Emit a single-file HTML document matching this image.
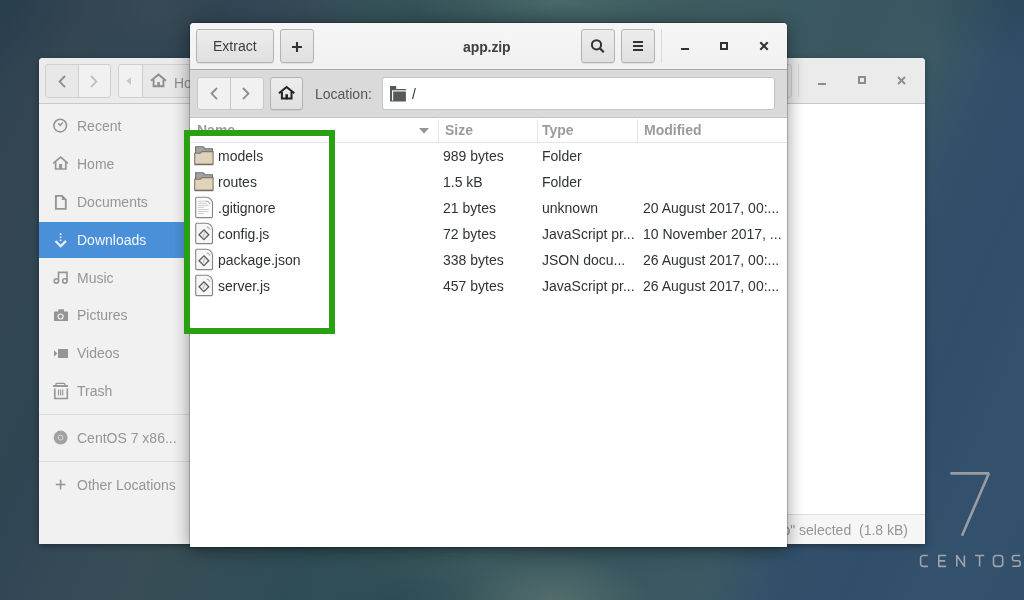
<!DOCTYPE html>
<html><head><meta charset="utf-8">
<style>
*{margin:0;padding:0;box-sizing:border-box}
html,body{width:1024px;height:600px;overflow:hidden}
body{position:relative;font-family:"Liberation Sans",sans-serif;font-size:14px;background:#2f4652;}
#bg{position:absolute;left:0;top:0;width:1024px;height:600px;
background:
 radial-gradient(ellipse 90px 70px at 0px 0px, rgba(38,58,74,0.5), rgba(38,58,74,0) 100%),
 radial-gradient(ellipse 120px 70px at 1024px 0px, rgba(40,66,84,0.6), rgba(40,66,84,0) 100%),
 radial-gradient(ellipse 60px 40px at 160px 10px, rgba(62,76,86,0.5), rgba(62,76,86,0) 100%),
 radial-gradient(ellipse 150px 40px at 560px 0px, rgba(74,108,106,0.95), rgba(74,108,106,0) 100%),
 radial-gradient(ellipse 110px 35px at 400px 0px, rgba(50,86,90,0.7), rgba(50,86,90,0) 100%),
 radial-gradient(ellipse 95px 45px at 556px 600px, rgba(84,110,108,0.95), rgba(84,110,108,0) 100%),
 radial-gradient(ellipse 130px 55px at 390px 600px, rgba(42,72,80,0.75), rgba(42,72,80,0) 100%),
 linear-gradient(113deg,#2b4150 0%,#334551 6%,#314753 12%,#2f4552 17%,#344856 22%,#384d56 30%,#2f4d55 42%,#3d5b60 56%,#3a5760 68%,#3c5963 74%,#32506a 80%,#304d6a 86%,#33506c 92%,#32506c 100%);}
.abs{position:absolute}
.win{position:absolute;overflow:hidden}
#bw{left:39px;top:58px;width:886px;height:486px;background:#fff;border-radius:4px 4px 0 0;
 box-shadow:0 2px 6px rgba(0,0,0,0.35)}
#bwh{left:0;top:0;width:886px;height:46px;background:#ebebeb;border-bottom:1px solid #c9c9c7}
#fw{left:190px;top:23px;width:597px;height:524px;background:#fff;border-radius:4px 4px 0 0;
 box-shadow:0 0 0 1px rgba(0,0,0,0.2),0 3px 18px rgba(0,0,0,0.42)}
#fwh{left:0;top:0;width:597px;height:47px;background:linear-gradient(#f6f6f6,#f1f1f1);border-bottom:1px solid #a9a9a6}
#tb{left:0;top:47px;width:597px;height:48px;background:#dadada;border-bottom:1px solid #c4c4c2}
.btn{position:absolute;border:1px solid #b3b3b0;border-radius:3px;background:linear-gradient(#ededed,#dfdfdf);
 box-shadow:0 1px 0 rgba(0,0,0,0.07)}
.txt{will-change:transform;position:absolute;white-space:nowrap;line-height:14px}
.hdr{will-change:transform;position:absolute;white-space:nowrap;line-height:14px;font-weight:bold;color:#9a9c9c}
.vsep{position:absolute;width:1px;background:#e3e3e3}
</style></head><body>
<div id="bg"></div>

<!-- CentOS logo -->
<svg class="abs" style="left:900px;top:460px" width="124" height="120" viewBox="900 460 124 120">
 <path d="M950.4 473.4h38.4L962 535.8" fill="none" stroke="#999da2" stroke-width="2.6" stroke-linejoin="bevel"/>
 <g fill="none" stroke="#9fa4a9" stroke-width="1.6" stroke-linejoin="round">
  <path d="M927.8 555.5h-4.6a2.6 2.6 0 0 0-2.6 2.6v5.7a2.6 2.6 0 0 0 2.6 2.6h4.6"/>
  <path d="M946.2 555.5h-7.4v10.9h7.4M938.8 560.9h6.4"/>
  <path d="M956.8 566.5V555.5l7.6 10.9V555.5"/>
  <path d="M975 555.5h9.2M979.6 555.5v11"/>
  <path d="M996.1 555.5h4a2.6 2.6 0 0 1 2.6 2.6v5.7a2.6 2.6 0 0 1-2.6 2.6h-4a2.6 2.6 0 0 1-2.6-2.6v-5.7a2.6 2.6 0 0 1 2.6-2.6z"/>
  <path d="M1020.2 555.5h-5.6a2.2 2.2 0 0 0-2.2 2.2v0.8a2.2 2.2 0 0 0 2.2 2.2h3.4a2.2 2.2 0 0 1 2.2 2.2v1.2a2.2 2.2 0 0 1-2.2 2.2h-5.8"/>
 </g>
</svg>

<!-- back window -->
<div id="bw" class="win">
  <div id="bwh" class="abs">
    <!-- nav group -->
    <div class="abs" style="left:6px;top:6px;width:66px;height:34px;border:1px solid #cfcfcd;border-radius:3px;background:#f1f1f1;overflow:hidden">
      <div class="abs" style="left:0;top:0;width:33px;height:32px;background:#e8e8e8;border-right:1px solid #cfcfcd"></div>
    </div>
    <svg class="abs" style="left:18px;top:17px" width="10" height="14" viewBox="0 0 10 14"><path d="M8 1L2.6 6.6 8 12.2" fill="none" stroke="#8b8e8f" stroke-width="1.9"/></svg>
    <svg class="abs" style="left:50px;top:17px" width="10" height="14" viewBox="0 0 10 14"><path d="M2 1l5.4 5.6L2 12.2" fill="none" stroke="#bfc1c2" stroke-width="1.9"/></svg>
    <!-- path bar -->
    <div class="abs" style="left:79px;top:6px;width:200px;height:34px;border:1px solid #cfcfcd;border-radius:3px;background:#e8e8e8;overflow:hidden">
      <div class="abs" style="left:0;top:0;width:24px;height:32px;background:#f1f1f1;border-right:1px solid #cfcfcd"></div>
    </div>
    <svg class="abs" style="left:86px;top:18px" width="8" height="10" viewBox="0 0 8 10"><path d="M6 1v8L1.5 5z" fill="#c4c6c7"/></svg>
    <svg class="abs" style="left:111px;top:15px" width="18" height="16" viewBox="0 0 18 16"><path d="M1 7.7L8.5 1.4l7.5 6.3" fill="none" stroke="#8b8e8f" stroke-width="1.9"/><path d="M3.6 6.6v6.7h9.8V6.6" fill="none" stroke="#8b8e8f" stroke-width="1.9"/><rect x="7.3" y="9" width="2.5" height="5" fill="#8b8e8f"/></svg>
    <div class="txt" style="left:135px;top:18px;color:#8b8e8f">Home</div>
    <!-- right side -->
    <div class="abs" style="left:700px;top:6px;width:53px;height:34px;border:1px solid #cfcfcd;border-radius:3px;background:#e8e8e8"></div>
    <div class="abs" style="left:759px;top:6px;width:1px;height:33px;background:#d3d3d1"></div>
    <div class="abs" style="left:779px;top:25px;width:8px;height:2px;background:#8b8e8f"></div>
    <div class="abs" style="left:819px;top:18px;width:8px;height:8px;border:2px solid #8b8e8f"></div>
    <svg class="abs" style="left:858px;top:18px" width="9" height="9" viewBox="0 0 9 9"><path d="M1 1l7 7M8 1l-7 7" stroke="#8b8e8f" stroke-width="1.9"/></svg>
  </div>
  <!-- sidebar -->
  <div class="abs" style="left:0;top:46px;width:180px;height:440px;background:#f1f1f1">
  </div>
  <div class="abs" style="left:0;top:356px;width:180px;height:1px;background:#dcdcdc"></div>
  <div class="abs" style="left:0;top:403px;width:180px;height:1px;background:#dcdcdc"></div>
  <div class="abs" style="left:0;top:0;width:180px;height:486px">
<div class="txt" style="left:38px;top:61px;color:#939697;">Recent</div>
<div class="txt" style="left:38px;top:99px;color:#939697;">Home</div>
<div class="txt" style="left:38px;top:137px;color:#939697;">Documents</div>
<div class="abs" style="left:0;top:164px;width:160px;height:36px;background:#4a90d9"></div>
<div class="txt" style="left:38px;top:175px;color:#f3f7fc;">Downloads</div>
<div class="txt" style="left:38px;top:213px;color:#939697;">Music</div>
<div class="txt" style="left:38px;top:250px;color:#939697;">Pictures</div>
<div class="txt" style="left:38px;top:288px;color:#939697;">Videos</div>
<div class="txt" style="left:38px;top:326px;color:#939697;">Trash</div>
<div class="txt" style="left:38px;top:373px;color:#939697;">CentOS 7 x86...</div>
<div class="txt" style="left:38px;top:420px;color:#939697;">Other Locations</div>
  </div>
  <!-- status bar -->
  <div class="abs" style="left:151px;top:456px;width:735px;height:30px;background:#f6f6f6;border-top:1px solid #dcdcdc"></div>
  <div class="txt" style="left:700px;top:465px;color:#939596;text-align:right;width:169px">app.zip" selected&nbsp;&nbsp;(1.8 kB)</div>
</div>

<!-- sidebar icons (page coords) -->
<svg class="abs" style="left:0;top:0" width="200" height="600" viewBox="0 0 200 600">

<circle cx="60.2" cy="125.6" r="6.3" fill="none" stroke="#939596" stroke-width="1.6"/>
<path d="M58.2 123.2l2 2.1 2.6-2.8" fill="none" stroke="#939596" stroke-width="1.5"/>
<path d="M53.2 163.4L60.6 157l7.4 6.4" fill="none" stroke="#939596" stroke-width="1.7"/>
<path d="M55.6 162v7h10.2v-7" fill="none" stroke="#939596" stroke-width="1.7"/>
<rect x="59.1" y="164" width="3" height="5" fill="#939596"/>
<path d="M55.9 195.9h6l3.9 4v9h-9.9z" fill="none" stroke="#939596" stroke-width="1.9"/>
<path d="M61.9 195v5h4.9z" fill="#939596"/>
<path d="M60.6 233.3v1.6M60.6 236.4v1.6M60.6 239.5v1.6" stroke="#e6eef8" stroke-width="1.7"/>
<path d="M55.5 241l5.2 5.2 5.3-5.3" fill="none" stroke="#e6eef8" stroke-width="2.3"/>
<path d="M58.5 280.8V272.4h8.5v8.4" fill="none" stroke="#939596" stroke-width="1.6"/>
<circle cx="56.4" cy="280.9" r="2.2" fill="none" stroke="#939596" stroke-width="1.6"/>
<circle cx="64.9" cy="280.9" r="2.2" fill="none" stroke="#939596" stroke-width="1.6"/>
<path d="M54 311.4h4l0.5-2.2h5.3l0.5 2.2h3.7v9.6H54z" fill="#939596"/>
<circle cx="60.6" cy="316.5" r="3.1" fill="#f1f1f1"/>
<circle cx="60.6" cy="316.5" r="1.9" fill="#939596"/>
<path d="M54 350.2l3.4 3.3-3.4 3.3z" fill="#939596"/>
<rect x="58" y="349" width="10" height="9" fill="#939596"/>
<path d="M53 386h15" stroke="#939596" stroke-width="1.9"/>
<path d="M55.9 385.8v-1.4a1 1 0 0 1 1-1h7a1 1 0 0 1 1 1v1.4" fill="none" stroke="#939596" stroke-width="1.3"/>
<path d="M54.8 388.5v10h12.5v-10" fill="none" stroke="#939596" stroke-width="1.6"/>
<path d="M58.5 389.5v6M60.6 389.5v6M62.7 389.5v6" stroke="#939596" stroke-width="1.1"/>
<circle cx="60.6" cy="437.6" r="7" fill="#a0a2a2"/>
<circle cx="60.6" cy="437.6" r="2.4" fill="none" stroke="#d6d6d6" stroke-width="1"/>
<path d="M55.8 484.5h9.6M60.6 479.8v9.6" stroke="#939596" stroke-width="1.6"/>

</svg>

<!-- front window -->
<div id="fw" class="win">
  <div id="fwh" class="abs">
    <div class="btn" style="left:6px;top:6px;width:78px;height:34px"></div>
    <div class="txt" style="left:23px;top:16px;color:#3a3f41">Extract</div>
    <div class="btn" style="left:90px;top:6px;width:34px;height:34px"></div>
    <svg class="abs" style="left:101px;top:18px" width="12" height="12" viewBox="0 0 12 12"><path d="M6 1v10M1 6h10" stroke="#2e3436" stroke-width="2.1"/></svg>
    <div class="txt" style="left:273px;top:17px;font-weight:bold;color:#3c4143;letter-spacing:-0.1px">app.zip</div>
    <div class="btn" style="left:391px;top:6px;width:34px;height:34px"></div>
    <svg class="abs" style="left:400px;top:15px" width="16" height="16" viewBox="0 0 16 16"><circle cx="6.5" cy="6.8" r="4.6" fill="none" stroke="#2e3436" stroke-width="2"/><path d="M9.8 10.2l4 4" stroke="#2e3436" stroke-width="2.2"/></svg>
    <div class="btn" style="left:431px;top:6px;width:34px;height:34px"></div>
    <div class="abs" style="left:443px;top:18px;width:10px;height:2px;background:#2e3436"></div>
    <div class="abs" style="left:443px;top:22px;width:10px;height:2px;background:#2e3436"></div>
    <div class="abs" style="left:443px;top:26px;width:10px;height:2px;background:#2e3436"></div>
    <div class="abs" style="left:471px;top:6px;width:1px;height:34px;background:#dadad8"></div>
    <div class="abs" style="left:491px;top:25px;width:8px;height:2px;background:#2e3436"></div>
    <div class="abs" style="left:530px;top:19px;width:8px;height:8px;border:2px solid #2e3436"></div>
    <svg class="abs" style="left:569px;top:18px" width="10" height="10" viewBox="0 0 10 10"><path d="M1.3 1.3l7.4 7.4M8.7 1.3l-7.4 7.4" stroke="#2e3436" stroke-width="2"/></svg>
  </div>
  <div id="tb" class="abs">
    <!-- nav -->
    <div class="abs" style="left:7px;top:7px;width:67px;height:33px;border:1px solid #c8c8c6;border-radius:3px;background:#f1f1f1;overflow:hidden">
      <div class="abs" style="left:32px;top:0;width:1px;height:31px;background:#c8c8c6"></div>
    </div>
    <svg class="abs" style="left:19px;top:17px" width="10" height="14" viewBox="0 0 10 14"><path d="M8 1L2.6 6.6 8 12.2" fill="none" stroke="#8b8e8f" stroke-width="1.9"/></svg>
    <svg class="abs" style="left:51px;top:17px" width="10" height="14" viewBox="0 0 10 14"><path d="M2 1l5.4 5.6L2 12.2" fill="none" stroke="#8b8e8f" stroke-width="1.9"/></svg>
    <div class="btn" style="left:80px;top:7px;width:33px;height:33px"></div>
    <svg class="abs" style="left:88px;top:15px" width="18" height="16" viewBox="0 0 18 16"><path d="M1 8.2L8.6 2l7.7 6.2" fill="none" stroke="#1f2324" stroke-width="2.1"/><path d="M3.9 7v6.6h9.6V7" fill="none" stroke="#1f2324" stroke-width="2"/><rect x="7.4" y="9.3" width="2.6" height="5" fill="#1f2324"/></svg>
    <div class="txt" style="left:125px;top:17px;color:#555753">Location:</div>
    <div class="abs" style="left:192px;top:7px;width:393px;height:33px;border:1px solid #c4c4c2;border-radius:3px;background:#fff"></div>
    <svg class="abs" style="left:200px;top:16px" width="17" height="16" viewBox="0 0 17 16"><path d="M0 0h6.2v3h9.7v12.5H0z" fill="#54595b"/><path d="M2.6 14.6V4.9h13.3" fill="none" stroke="#f4f4f4" stroke-width="1.2"/></svg>
    <div class="txt" style="left:222px;top:17px;color:#2e3436">/</div>
  </div>
  <!-- column header -->
  <div class="abs" style="left:0;top:95px;width:597px;height:25px;background:#fff;border-bottom:1px solid #e6e6e6"></div>
  <div class="vsep" style="left:248px;top:96px;height:23px"></div>
  <div class="vsep" style="left:347px;top:96px;height:23px"></div>
  <div class="vsep" style="left:447px;top:96px;height:23px"></div>
  <div class="hdr" style="left:7px;top:100px">Name</div>
  <svg class="abs" style="left:229px;top:105px" width="10" height="6" viewBox="0 0 10 6"><path d="M0 0h10L5 5.5z" fill="#929595"/></svg>
  <div class="hdr" style="left:255px;top:100px">Size</div>
  <div class="hdr" style="left:352px;top:100px">Type</div>
  <div class="hdr" style="left:454px;top:100px">Modified</div>
<svg class="abs" style="left:3px;top:122px" width="22" height="22" viewBox="0 0 22 22">
<path d="M2.6 1.7h7.6l1.6 2h7.6v5.5H2.6z" fill="#a2a2a0" stroke="#6f6f6d" stroke-width="1.1"/>
<path d="M1.7 8.3h5.6l1.8-1.7h11v12.6a0.5 0.5 0 0 1-0.5 0.5h-17.4a0.5 0.5 0 0 1-0.5-0.5z" fill="#e1d3b9" stroke="#7b766e" stroke-width="1.1"/>
<path d="M2.2 19.2h17.6" stroke="#64605a" stroke-width="1"/>
</svg>
<div class="txt" style="left:28px;top:126px;color:#2e3436;">models</div>
<div class="txt" style="left:253px;top:126px;color:#2e3436;">989 bytes</div>
<div class="txt" style="left:352px;top:126px;color:#2e3436;">Folder</div>
<svg class="abs" style="left:3px;top:148px" width="22" height="22" viewBox="0 0 22 22">
<path d="M2.6 1.7h7.6l1.6 2h7.6v5.5H2.6z" fill="#a2a2a0" stroke="#6f6f6d" stroke-width="1.1"/>
<path d="M1.7 8.3h5.6l1.8-1.7h11v12.6a0.5 0.5 0 0 1-0.5 0.5h-17.4a0.5 0.5 0 0 1-0.5-0.5z" fill="#e1d3b9" stroke="#7b766e" stroke-width="1.1"/>
<path d="M2.2 19.2h17.6" stroke="#64605a" stroke-width="1"/>
</svg>
<div class="txt" style="left:28px;top:152px;color:#2e3436;">routes</div>
<div class="txt" style="left:253px;top:152px;color:#2e3436;">1.5 kB</div>
<div class="txt" style="left:352px;top:152px;color:#2e3436;">Folder</div>
<svg class="abs" style="left:4px;top:173px" width="20" height="23" viewBox="0 0 20 23">
<path d="M1.7 2.3a1 1 0 0 1 1-1h9.6a6.2 6.2 0 0 1 6.2 6.2v13.1a1 1 0 0 1-1 1H2.7a1 1 0 0 1-1-1z" fill="#fbfbfb" stroke="#858585" stroke-width="1.1"/>
<path d="M12.6 5.2c1 0 2.6 1.2 3.3 2.6" fill="none" stroke="#7a7a7a" stroke-width="0.9"/>
<path d="M4 5.2h9M4 7.3h9M4 9.4h10.5M4 11.4h6M4 13.5h10.5M4 15.5h10.5M4 17.6h6" stroke="#c9c9c9" stroke-width="0.9"/>
</svg>
<div class="txt" style="left:28px;top:178px;color:#2e3436;">.gitignore</div>
<div class="txt" style="left:253px;top:178px;color:#2e3436;">21 bytes</div>
<div class="txt" style="left:352px;top:178px;color:#2e3436;">unknown</div>
<div class="txt" style="left:453px;top:178px;color:#2e3436;">20 August 2017, 00:...</div>
<svg class="abs" style="left:4px;top:199px" width="20" height="23" viewBox="0 0 20 23">
<path d="M1.7 2.3a1 1 0 0 1 1-1h9.6a6.2 6.2 0 0 1 6.2 6.2v13.1a1 1 0 0 1-1 1H2.7a1 1 0 0 1-1-1z" fill="#f6f6f6" stroke="#858585" stroke-width="1.1"/>
<path d="M12.8 5.1c1 0 2.4 1 3 2.4" fill="none" stroke="#7a7a7a" stroke-width="0.9"/>
<path d="M9.9 7.8l4.9 4.9-4.9 4.9-4.9-4.9z" fill="#ececec" stroke="#5e5e5e" stroke-width="1.3"/>
<path d="M10.6 10.3l-1.4 4.6" stroke="#b0b0b0" stroke-width="0.8"/>
</svg>
<div class="txt" style="left:28px;top:204px;color:#2e3436;">config.js</div>
<div class="txt" style="left:253px;top:204px;color:#2e3436;">72 bytes</div>
<div class="txt" style="left:352px;top:204px;color:#2e3436;">JavaScript pr...</div>
<div class="txt" style="left:453px;top:204px;color:#2e3436;">10 November 2017, ...</div>
<svg class="abs" style="left:4px;top:225px" width="20" height="23" viewBox="0 0 20 23">
<path d="M1.7 2.3a1 1 0 0 1 1-1h9.6a6.2 6.2 0 0 1 6.2 6.2v13.1a1 1 0 0 1-1 1H2.7a1 1 0 0 1-1-1z" fill="#f6f6f6" stroke="#858585" stroke-width="1.1"/>
<path d="M12.8 5.1c1 0 2.4 1 3 2.4" fill="none" stroke="#7a7a7a" stroke-width="0.9"/>
<path d="M9.9 7.8l4.9 4.9-4.9 4.9-4.9-4.9z" fill="#ececec" stroke="#5e5e5e" stroke-width="1.3"/>
<path d="M10.6 10.3l-1.4 4.6" stroke="#b0b0b0" stroke-width="0.8"/>
</svg>
<div class="txt" style="left:28px;top:230px;color:#2e3436;">package.json</div>
<div class="txt" style="left:253px;top:230px;color:#2e3436;">338 bytes</div>
<div class="txt" style="left:352px;top:230px;color:#2e3436;">JSON docu...</div>
<div class="txt" style="left:453px;top:230px;color:#2e3436;">26 August 2017, 00:...</div>
<svg class="abs" style="left:4px;top:251px" width="20" height="23" viewBox="0 0 20 23">
<path d="M1.7 2.3a1 1 0 0 1 1-1h9.6a6.2 6.2 0 0 1 6.2 6.2v13.1a1 1 0 0 1-1 1H2.7a1 1 0 0 1-1-1z" fill="#f6f6f6" stroke="#858585" stroke-width="1.1"/>
<path d="M12.8 5.1c1 0 2.4 1 3 2.4" fill="none" stroke="#7a7a7a" stroke-width="0.9"/>
<path d="M9.9 7.8l4.9 4.9-4.9 4.9-4.9-4.9z" fill="#ececec" stroke="#5e5e5e" stroke-width="1.3"/>
<path d="M10.6 10.3l-1.4 4.6" stroke="#b0b0b0" stroke-width="0.8"/>
</svg>
<div class="txt" style="left:28px;top:256px;color:#2e3436;">server.js</div>
<div class="txt" style="left:253px;top:256px;color:#2e3436;">457 bytes</div>
<div class="txt" style="left:352px;top:256px;color:#2e3436;">JavaScript pr...</div>
<div class="txt" style="left:453px;top:256px;color:#2e3436;">26 August 2017, 00:...</div>
</div>

<!-- green highlight -->
<div class="abs" style="left:184px;top:130px;width:151px;height:204px;border:6px solid #28a112"></div>

</body></html>
